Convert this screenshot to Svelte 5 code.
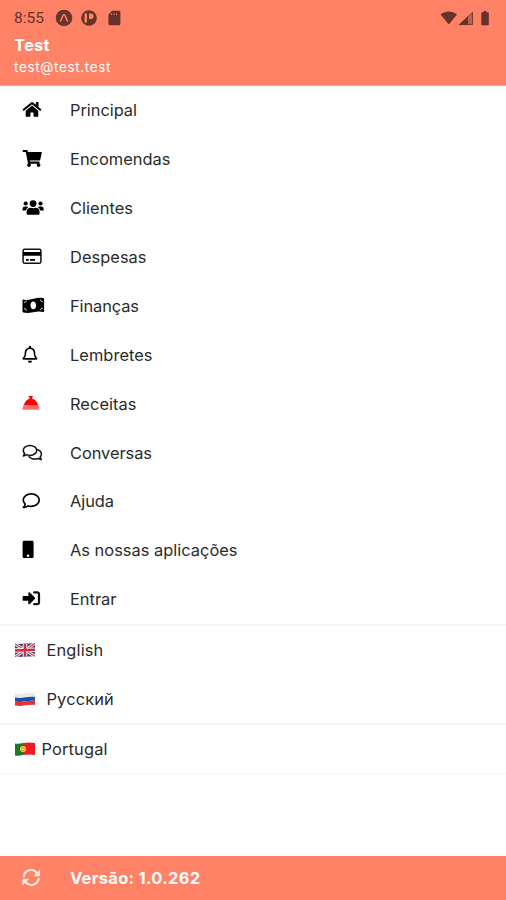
<script>
  const menu = [
    { icon: 'home', label: 'Principal', width: 67 },
    { icon: 'cart', label: 'Encomendas', width: 100.5 },
    { icon: 'users', label: 'Clientes', width: 63 },
    { icon: 'card', label: 'Despesas', width: 76.5 },
    { icon: 'money', label: 'Finanças', width: 69 },
    { icon: 'bell', label: 'Lembretes', width: 82.5 },
    { icon: 'bowl', label: 'Receitas', width: 66.5 },
    { icon: 'chats', label: 'Conversas', width: 82 },
    { icon: 'chat', label: 'Ajuda', width: 44 },
    { icon: 'phone', label: 'As nossas aplicações', width: 167.5 },
    { icon: 'login', label: 'Entrar', width: 46.5 }
  ]

  const languages = [
    { code: 'gb', label: 'English' },
    { code: 'ru', label: 'Русский' },
    { code: 'pt', label: 'Portugal' }
  ]
</script>

{#snippet icon(name)}
  <svg class="icon" viewBox="0 0 24 20">
    {#if name === 'home'}
      <path transform="translate(0.6 1) scale(.0326)" d="M280.37 148.26L96 300.11V464a16 16 0 0 0 16 16l112.06-.29a16 16 0 0 0 15.92-16V368a16 16 0 0 1 16-16h64a16 16 0 0 1 16 16v95.64a16 16 0 0 0 16 16.05L464 480a16 16 0 0 0 16-16V300L295.67 148.26a12.19 12.19 0 0 0-15.3 0zM571.6 251.47L488 182.56V44.05a12 12 0 0 0-12-12h-56a12 12 0 0 0-12 12v72.61L318.47 43a48 48 0 0 0-61 0L4.34 251.47a12 12 0 0 0-1.6 16.9l25.5 31A12 12 0 0 0 45.15 301l235.22-193.74a12.19 12.19 0 0 1 15.3 0L530.9 301a12 12 0 0 0 16.9-1.6l25.5-31a12 12 0 0 0-1.7-16.93z" />
    {:else if name === 'cart'}
      <path transform="translate(0.6 .9) scale(.0333)" d="M528.12 301.319l47.273-208C578.806 78.301 567.391 64 551.99 64H159.208l-9.166-44.81C147.758 8.021 137.93 0 126.529 0H24C10.745 0 0 10.745 0 24v16c0 13.255 10.745 24 24 24h69.883l70.248 343.435C147.325 417.1 136 435.222 136 456c0 30.928 25.072 56 56 56s56-25.072 56-56c0-15.674-6.447-29.835-16.824-40h209.647C430.447 426.165 424 440.326 424 456c0 30.928 25.072 56 56 56s56-25.072 56-56c0-22.172-12.888-41.332-31.579-50.405l5.517-24.276c3.413-15.018-8.002-29.319-23.403-29.319H218.117l-6.545-32h293.145c11.206 0 20.92-7.754 23.403-18.681z" />
    {:else if name === 'users'}
      <circle cx="11.1" cy="5.6" r="3.4" />
      <circle cx="3.7" cy="5.5" r="2.1" />
      <circle cx="18.5" cy="5.5" r="2.1" />
      <path d="M.5 12.400v-1.500a2.500 2.500 0 0 1 2.500-2.300h1.500c.8 0 1.300.2 1.800.6A5.300 5.300 0 0 0 4 12.400zM21.700 12.400v-1.500a2.500 2.500 0 0 0-2.500-2.300h-1.500c-.8 0-1.300.2-1.800.6a5.300 5.300 0 0 1 2.300 3.200zM4.600 15.400v-1.500c0-2.500 1.700-4.100 3.900-4.100 1 0 1.600.5 2.600.5s1.600-.5 2.600-.5c2.200 0 3.900 1.600 3.900 4.100v1.500c0 .8-.6 1.300-1.300 1.300H5.900c-.7 0-1.300-.5-1.300-1.300z" />
    {:else if name === 'card'}
      <rect class="line" x="1.1" y="2.3" width="17.8" height="14" rx="1.6" />
      <path d="M1 5h18v3.8H1zM4 12h2.8v1.8H4zM8 12h5v1.8H8z" />
    {:else if name === 'money'}
      <path fill-rule="evenodd" d="M.5 4.2c0-.5.3-.8.8-.7 6.7 2.1 13.4-3.1 20.1-1.3.4.1.7.4.7.9v12.2c0 .5-.4.8-.8.7-6.7-2.1-13.3 2.3-20 .5-.5-.1-.8-.4-.8-.9zm10.8 1.3c-1.7 0-2.8 1.7-2.8 3.9s1.1 3.8 2.8 3.8 2.8-1.7 2.8-3.8-1.1-3.9-2.8-3.9z" />
      <path class="cut" d="M2 6.3c1.4.1 2.1-.5 2.4-1.7M2 12.6c1.5.1 2.3.8 2.6 2M20.7 5.7c-1.4 0-2.2-.7-2.3-2M20.7 12.2c-1.5 0-2.2.7-2.4 2" />
    {:else if name === 'bell'}
      <path transform="translate(.5 .8) scale(.0333)" d="M439.39 362.29c-19.32-20.76-55.47-51.99-55.47-154.29 0-77.7-54.48-139.9-127.94-155.16V32c0-17.67-14.32-32-31.98-32s-31.98 14.33-31.98 32v20.84C118.56 68.1 64.08 130.3 64.08 208c0 102.3-36.15 133.53-55.47 154.29-6 6.45-8.66 14.16-8.61 21.71.11 16.4 12.98 32 32.1 32h383.8c19.12 0 32-15.6 32.1-32 .05-7.55-2.61-15.27-8.61-21.71zM67.53 368c21.22-27.97 44.42-74.33 44.53-159.42 0-.2-.06-.38-.06-.58 0-61.86 50.14-112 112-112s112 50.14 112 112c0 .2-.06.38-.06.58.11 85.1 23.31 131.46 44.53 159.42H67.53zM224 512c35.32 0 63.97-28.65 63.97-64H160.03c0 35.35 28.65 64 63.97 64z" />
    {:else if name === 'bowl'}
      <path fill="#f00" d="M1.800 11.600C2.500 8 4.800 5.400 7.500 4.800V3.600H6.800V2h4v1.600h-.6v1.200c3 .6 5.300 3.200 6 6.800z" />
      <path fill="#ff6b6b" d="M1.300 11.600h15.300l.9 4.200H.500z" />
    {:else if name === 'chats'}
      <path class="line" d="M8 2.400c3.800 0 6.700 2.200 6.700 5s-2.900 5-6.700 5c-1.300 0-2.500-.2-3.500-.7L1.300 13l1.300-2.600c-.8-.8-1.300-1.800-1.300-3 0-2.800 2.900-5 6.700-5z" />
      <path class="line" d="M14.800 6.500c2.700.6 4.600 2.500 4.600 4.700 0 1.100-.5 2.100-1.300 2.900l1.200 2.400-3.200-1c-1 .4-2.100.6-3.300.6-2.500 0-4.600-1-5.700-2.500" />
    {:else if name === 'chat'}
      <path transform="translate(.5 .9) scale(.0342)" d="M256 32C114.600 32 0 125.100 0 240c0 47.600 19.900 91.200 52.900 126.300C38 405.700 7 439.100 6.500 439.500c-6.600 7-8.400 17.200-4.600 26S14.400 480 24 480c61.500 0 110-25.700 139.100-46.300C192 442.800 223.200 448 256 448c141.400 0 256-93.100 256-208S397.400 32 256 32zm0 368c-26.700 0-53.100-4.100-78.400-12.100l-22.700-7.200-19.500 13.800c-14.300 10.100-33.900 21.400-57.500 29 7.300-12.100 14.400-25.700 19.900-40.200l10.600-28.100-20.600-21.800C69.700 314.100 48 282.200 48 240c0-88.200 93.300-160 208-160s208 71.800 208 160-93.300 160-208 160z" />
    {:else if name === 'phone'}
      <path fill-rule="evenodd" d="M2.200.8h8c.9 0 1.400.7 1.400 1.600v14c0 .9-.5 1.600-1.400 1.600h-8c-.9 0-1.600-.7-1.600-1.600v-14C.6 1.500 1.300.8 2.200.8zm3.900 13.700a1.200 1.200 0 1 0 0 2.400 1.200 1.200 0 0 0 0-2.400z" />
    {:else if name === 'login'}
      <path d="M1.500 6.900h4.800V4.200c0-.8.900-1.200 1.500-.6l5 5c.4.400.4 1 0 1.400l-5 5c-.6.600-1.500.2-1.500-.6v-2.700H1.500c-.5 0-.9-.4-.9-.9v-3c0-.5.4-.9.9-.9z" />
      <path class="line thick" d="M12.200 3.400h2.900c1.100 0 1.900.8 1.900 1.900v8c0 1.100-.8 1.900-1.900 1.900h-2.900" />
    {:else if name === 'sync'}
      <path class="line thick" d="M1.700 8.200a7.400 7.400 0 0 1 13-3.500l2 2M16.700 10.800a7.400 7.400 0 0 1-13 3.500l-2-2" />
      <path d="M18 1.500v6.700h-6.700zM.5 17.500v-6.700h6.700z" />
    {/if}
  </svg>
{/snippet}

<div class="app">
  <header>
    <div class="status">
      <span class="time">8:55</span>
      <svg class="apps" viewBox="0 0 68 20">
        <circle cx="9" cy="10" r="8.300" />
        <path class="mark" d="M5.500 13c1.300-1.500 2.200-6.500 3.500-6.500s2.200 5 3.500 6.500" />
        <circle cx="34" cy="10" r="7.800" />
        <path class="coral" d="M29.500 5.500h2.500v9h-2.500zM34 5.500h1.800a2.800 2.800 0 0 1 0 5.600H34z" />
        <path d="M57 2.800h7c.8 0 1.400.6 1.400 1.400v11.600c0 .8-.6 1.400-1.400 1.400H54.800c-.8 0-1.400-.6-1.400-1.400V6.800z" />
        <path class="coral" d="M56 5.500h1v1.500H56zM58.500 5.500h1v1.500h-1zM61 5.500h1v1.500H61z" />
      </svg>
      <svg class="signals" viewBox="0 0 52 20">
        <path d="M.5 6.500C5.500 2.500 12 2.500 17 6.500L8.800 16.500z" />
        <path d="M33 3.500V17H19z" opacity=".4" />
        <path d="M28 8.500V17h-9z" />
        <path class="edge" d="M32.500 4.500v12h-13z" />
        <path d="M42.300 4.300h1.400V2.800h2.600v1.500h1.500c.6 0 1 .4 1 1v10.900c0 .6-.4 1-1 1h-5.500c-.6 0-1-.4-1-1V5.300c0-.6.4-1 1-1z" />
      </svg>
    </div>
    <h1>Test</h1>
    <p>test@test.test</p>
  </header>

  <nav>
    {#each menu as item}
      <a href="#{item.icon}">
        {@render icon(item.icon)}
        <svg class="label" viewBox="0 0 200 24">
          <text x="0" y="18" textLength={item.width}>{item.label}</text>
        </svg>
      </a>
    {/each}
  </nav>

  <ul>
    {#each languages as lang}
      <li class={lang.code}>
        <svg class="flag" viewBox="0 0 20 14">
          {#if lang.code === 'gb'}
            <g transform="skewY(-2)">
              <rect y="1" width="20" height="13" rx="1" fill="#34437f" />
              <path d="m0 1 20 13M20 1 0 14" stroke="#eee" stroke-width="3" />
              <path d="m0 1 20 13M20 1 0 14" stroke="#d32b43" stroke-width="1" />
              <path d="M10 1v13M0 7.500h20" stroke="#eee" stroke-width="4.500" />
              <path d="M10 1v13M0 7.500h20" stroke="#d32b43" stroke-width="2.500" />
            </g>
          {:else if lang.code === 'ru'}
            <path d="M0 1.500c7 1.500 13-1.500 20-.5v4C13 4 7 7 0 5.500z" fill="#e9e9e9" />
            <path d="M0 5.500C7 7 13 4 20 5v4C13 8 7 11 0 9.500z" fill="#1c4fa8" />
            <path d="M0 9.500C7 11 13 8 20 9v4c-7-1-13 2-20 .5z" fill="#e33335" />
          {:else}
            <path d="M0 1.500C3 2 5.500 1.500 8 1v12c-2.500.5-5 1-8 .5z" fill="#21762f" />
            <path d="M8 1c4-.8 8-.8 12 0v12c-4-.8-8-.8-12 0z" fill="#ed1c20" />
            <circle cx="8" cy="7" r="3" fill="#f5d33b" />
            <path d="M6.500 5.500h3v2.200L8 9 6.500 7.700z" fill="#e85b41" />
            <path d="M7.300 6.200h1.400v1.500H7.300z" fill="#fff" />
          {/if}
        </svg>
        <span>{lang.label}</span>
      </li>
    {/each}
  </ul>

  <footer>
    {@render icon('sync')}
    <strong>Versão: 1.0.262</strong>
  </footer>
</div>

<style>
  :global(body) {
    margin: 0;
    background: #fff;
  }

  .app {
    display: flex;
    flex-direction: column;
    height: 900px;
    font-family: Inter, 'Noto Sans', sans-serif;
    color: #2a2a2a;
  }

  header {
    box-sizing: border-box;
    height: 86px;
    padding: 8px 14px 0;
    background: #ff8266;
    border-bottom: 1px solid #f3a08c;
    color: #fff;
  }

  .status {
    display: flex;
    align-items: center;
    height: 20px;
    color: #65332a;
    fill: #65332a;
  }

  .time {
    width: 41px;
    font-family: Roboto, sans-serif;
    font-size: 15.5px;
  }

  .apps {
    width: 68px;
    height: 20px;
  }

  .signals {
    width: 52px;
    height: 20px;
    margin-left: auto;
  }

  .mark {
    fill: none;
    stroke: #ff8266;
    stroke-width: 1.6;
    stroke-linecap: round;
  }

  .coral {
    fill: #ff8266;
  }

  .edge {
    fill: none;
    stroke: #65332a;
    stroke-width: 0.8;
  }

  h1 {
    margin: 7px 0 0;
    font-size: 16.5px;
    line-height: 20px;
    font-weight: 700;
    letter-spacing: 0.2px;
  }

  header p {
    margin: 3px 0 0;
    font-size: 13.5px;
    line-height: 18px;
    letter-spacing: 0.65px;
  }

  nav a {
    display: flex;
    align-items: center;
    height: 48.88px;
    padding-left: 22px;
    color: #222;
    text-decoration: none;
  }

  .icon {
    flex: none;
    width: 24px;
    height: 20px;
    margin-right: 24px;
    fill: #000;
  }

  .line {
    fill: none;
    stroke: #111;
    stroke-width: 1.5;
    stroke-linejoin: round;
    stroke-linecap: round;
  }

  .thick {
    stroke-width: 2.2;
  }

  .cut {
    fill: none;
    stroke: #fff;
    stroke-width: 0.9;
  }

  .label {
    width: 200px;
    height: 24px;
    fill: #2a2a2a;
    font-size: 16.4px;
  }

  ul {
    list-style: none;
    margin: 0;
    padding: 0;
    border-top: 2px solid #f5f5f5;
  }

  li {
    box-sizing: border-box;
    display: flex;
    align-items: center;
    gap: 12px;
    height: 48.7px;
    padding-left: 14.5px;
    font-size: 16.4px;
    letter-spacing: 0.15px;
  }

  .pt {
    gap: 7px;
    height: 52px;
    border-top: 2px solid #f5f5f5;
    border-bottom: 2px solid #f8f8f8;
  }

  .flag {
    width: 20px;
    height: 14px;
  }

  footer {
    display: flex;
    align-items: center;
    box-sizing: border-box;
    height: 44px;
    margin-top: auto;
    padding-left: 22px;
    background: #ff8266;
    color: #fff;
    font-size: 16.5px;
    letter-spacing: 0.3px;
  }

  footer .icon {
    fill: #ffe9e3;
  }

  footer .line {
    stroke: #ffe9e3;
  }
</style>
